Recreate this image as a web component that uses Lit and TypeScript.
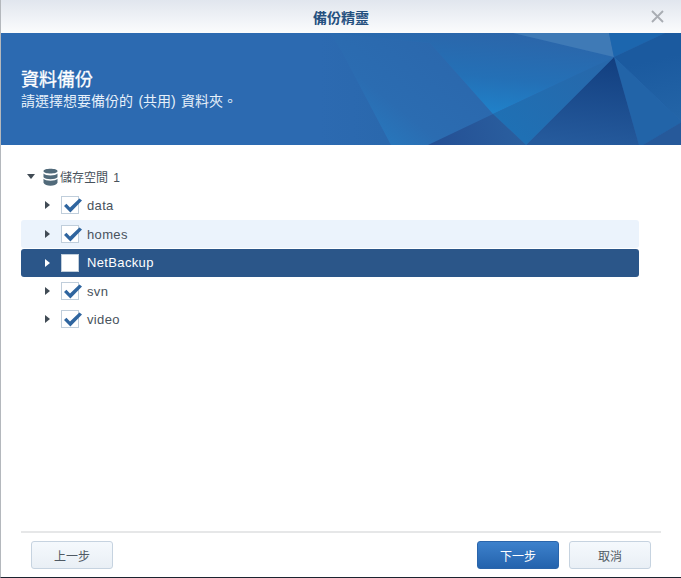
import { LitElement, html, css, svg } from "lit";
import { customElement } from "lit/decorators.js";

@customElement("app-root")
export class AppRoot extends LitElement {
  static styles = css`
    :host { display: block; width: 681px; height: 578px; font-family: "Liberation Sans", Arial, "Noto Sans CJK TC", sans-serif; }
    .win { width: 681px; height: 578px; box-sizing: border-box; background: #fff; border-left: 1px solid #b4b8bd; border-bottom: 1px solid #1c2430; display: flex; flex-direction: column; position: relative; }
    .title { height: 33px; flex: none; background: linear-gradient(#e1e6ee, #fbfcfd); display: flex; align-items: center; justify-content: center; font-size: 14px; font-weight: 700; color: #25507f; position: relative; }
    .close { position: absolute; right: 17px; top: 10px; width: 13px; height: 13px; }
    .banner { height: 112px; flex: none; background: #2c6ab1; color: #fff; position: relative; overflow: hidden; display: flex; flex-direction: column; padding: 36px 0 0 20px; box-sizing: border-box; }
    .art { position: absolute; left: -1px; top: 0; width: 681px; height: 112px; }
    .h1 { font-size: 18px; font-weight: 400; line-height: 22px; position: relative; -webkit-text-stroke: 0.3px #fff; }
    .sub { font-size: 14px; line-height: 18px; margin-top: 1px; position: relative; color: #e6f0fa; word-spacing: 1.5px; }
    .tree { flex: 1; padding: 18px 0 0 20px; width: 618px; display: flex; flex-direction: column; }
    .row { height: 28px; display: flex; align-items: center; border-radius: 3px; font-size: 13px; color: #48525c; flex: none; box-sizing: border-box; }
    .row.root { padding: 0 0 1px 6px; }
    .row.child { padding-left: 24px; }
    .row.hover { background: #ebf3fc; margin-top: 1px; }
    .row.sel { background: #2b5689; color: #fff; margin-top: 1px; }
    .row.sel .label { position: relative; top: -1px; }
    .exp { width: 0; height: 0; border-left: 5px solid #414b55; border-top: 4px solid transparent; border-bottom: 4px solid transparent; flex: none; margin-right: 11px; }
    .sel .exp { border-left-color: #fff; }
    .exp.open { border-left: 4.5px solid transparent; border-right: 4.5px solid transparent; border-top: 5px solid #414b55; border-bottom: 0; margin-right: 8px; }
    .db { width: 15px; height: 18px; flex: none; margin-right: 2px; }
    .cb { width: 18px; height: 18px; box-sizing: border-box; border: 1px solid #c0cedb; background: #fff; flex: none; position: relative; margin-right: 8px; }
    .cb svg { position: absolute; left: 1px; top: 1px; width: 20px; height: 16px; overflow: visible; }
    .label { letter-spacing: 0.35px; }
    .root .label { font-size: 12px; letter-spacing: 0; word-spacing: 2px; }
    .foot { flex: none; margin: 0 20px; border-top: 2px solid #e6e7e8; height: 46px; display: flex; align-items: flex-start; padding: 8px 10px 0; gap: 10px; box-sizing: border-box; width: 640px; }
    .btn { width: 82px; height: 28px; box-sizing: border-box; border: 1px solid #c6d3e0; border-radius: 3px; background: linear-gradient(#f5f9fd, #e9eff5); color: #505a64; font-size: 12px; display: flex; align-items: center; justify-content: center; }
    .btn.primary { background: linear-gradient(#3d81cc, #2463ad); border-color: #2a65ab; color: #fff; }
    .spacer { flex: 1; }
  `;

  private art() {
    const p = (d: string, f: string) => svg`<polygon points=${d} fill=${f}></polygon>`;
    const A = "614,24", B = "493,81";
    return html`<svg class="art" viewBox="0 0 681 112" aria-hidden="true">
      <defs>
        <linearGradient id="g1" gradientUnits="userSpaceOnUse" x1="500" y1="0" x2="492" y2="82"><stop offset="0" stop-color="#2b66aa"/><stop offset="0.55" stop-color="#2470b6"/><stop offset="1" stop-color="#1f82ca"/></linearGradient>
        <linearGradient id="g3" gradientUnits="userSpaceOnUse" x1="600" y1="24" x2="590" y2="112"><stop offset="0" stop-color="#123f80"/><stop offset="1" stop-color="#255a9c"/></linearGradient>
        <linearGradient id="g4" gradientUnits="userSpaceOnUse" x1="460" y1="30" x2="395" y2="112"><stop offset="0" stop-color="#2b68ad"/><stop offset="0.7" stop-color="#2b6cb1"/><stop offset="1" stop-color="#2875ba"/></linearGradient>
        <linearGradient id="g5" gradientUnits="userSpaceOnUse" x1="600" y1="30" x2="530" y2="112"><stop offset="0" stop-color="#2768ab"/><stop offset="1" stop-color="#1f70b4"/></linearGradient>
        <linearGradient id="g6" gradientUnits="userSpaceOnUse" x1="430" y1="112" x2="520" y2="90"><stop offset="0" stop-color="#244f94"/><stop offset="1" stop-color="#2a5f9f"/></linearGradient>
        <linearGradient id="g7" gradientUnits="userSpaceOnUse" x1="640" y1="30" x2="660" y2="112"><stop offset="0" stop-color="#1b5a9f"/><stop offset="1" stop-color="#2668aa"/></linearGradient>
        <linearGradient id="g8" gradientUnits="userSpaceOnUse" x1="320" y1="0" x2="385" y2="0"><stop offset="0" stop-color="#2c6ab1"/><stop offset="1" stop-color="#2a68ad"/></linearGradient>
      </defs>
      ${p("341,17 391,112 300,112 300,0 330,0", "url(#g8)")}
      ${p("330,0 430,10 " + B + " 428,112 391,112 341,17", "url(#g4)")}
      ${p("330,0 513,0 " + A + " " + B + " 430,10", "url(#g1)")}
      ${p("513,0 609,0 " + A, "#3f7ab6")}
      ${p("609,0 665,0 " + A, "#1c66ae")}
      ${p("665,0 682,0 682,89 " + A, "url(#g7)")}
      ${p(A + " 682,89 643,112 639,112", "#2264a8")}
      ${p("682,89 682,112 643,112", "#26599a")}
      ${p(A + " 639,112 526,112", "url(#g3)")}
      ${p(A + " 526,112 " + B, "url(#g5)")}
      ${p(B + " 526,112 428,112", "url(#g6)")}
    </svg>`;
  }

  private check() {
    return html`<svg viewBox="0 0 20 16" aria-hidden="true"><path d="M1 8 L3.4 5.8 L7 9.4 L16.4 0.6 L19 2.6 L7.4 14.6 Z" fill="#2f659f"></path></svg>`;
  }

  private child(name: string, checked: boolean, cls = "") {
    return html`<div class="row child ${cls}">
      <span class="exp"></span>
      <span class="cb">${checked ? this.check() : ""}</span>
      <span class="label">${name}</span>
    </div>`;
  }

  render() {
    return html`<div class="win">
      <div class="title">備份精靈
        <svg class="close" viewBox="0 0 13 13" aria-hidden="true"><path d="M1 1 L12 12 M12 1 L1 12" stroke="#a9adb3" stroke-width="1.9" fill="none"></path></svg>
      </div>
      <div class="banner">
        ${this.art()}
        <div class="h1">資料備份</div>
        <div class="sub">請選擇想要備份的 (共用) 資料夾。</div>
      </div>
      <div class="tree">
        <div class="row root">
          <span class="exp open"></span>
          <svg class="db" viewBox="0 0 15 18" aria-hidden="true">
            <path d="M0.5 3.2 C0.5 0 14.5 0 14.5 3.2 C14.5 6.2 0.5 6.2 0.5 3.2 Z" fill="#516a7a"></path>
            <path d="M0.5 5.6 C2 8.2 13 8.2 14.5 5.6 V9.2 C13 11.8 2 11.8 0.5 9.2 Z" fill="#516a7a"></path>
            <path d="M0.5 10.8 C2 13.4 13 13.4 14.5 10.8 V14.8 C13 18.6 2 18.6 0.5 14.8 Z" fill="#516a7a"></path>
          </svg>
          <span class="label">儲存空間 1</span>
        </div>
        ${this.child("data", true)}
        ${this.child("homes", true, "hover")}
        ${this.child("NetBackup", false, "sel")}
        ${this.child("svn", true)}
        ${this.child("video", true)}
      </div>
      <div class="foot">
        <div class="btn">上一步</div>
        <div class="spacer"></div>
        <div class="btn primary">下一步</div>
        <div class="btn">取消</div>
      </div>
    </div>`;
  }
}
